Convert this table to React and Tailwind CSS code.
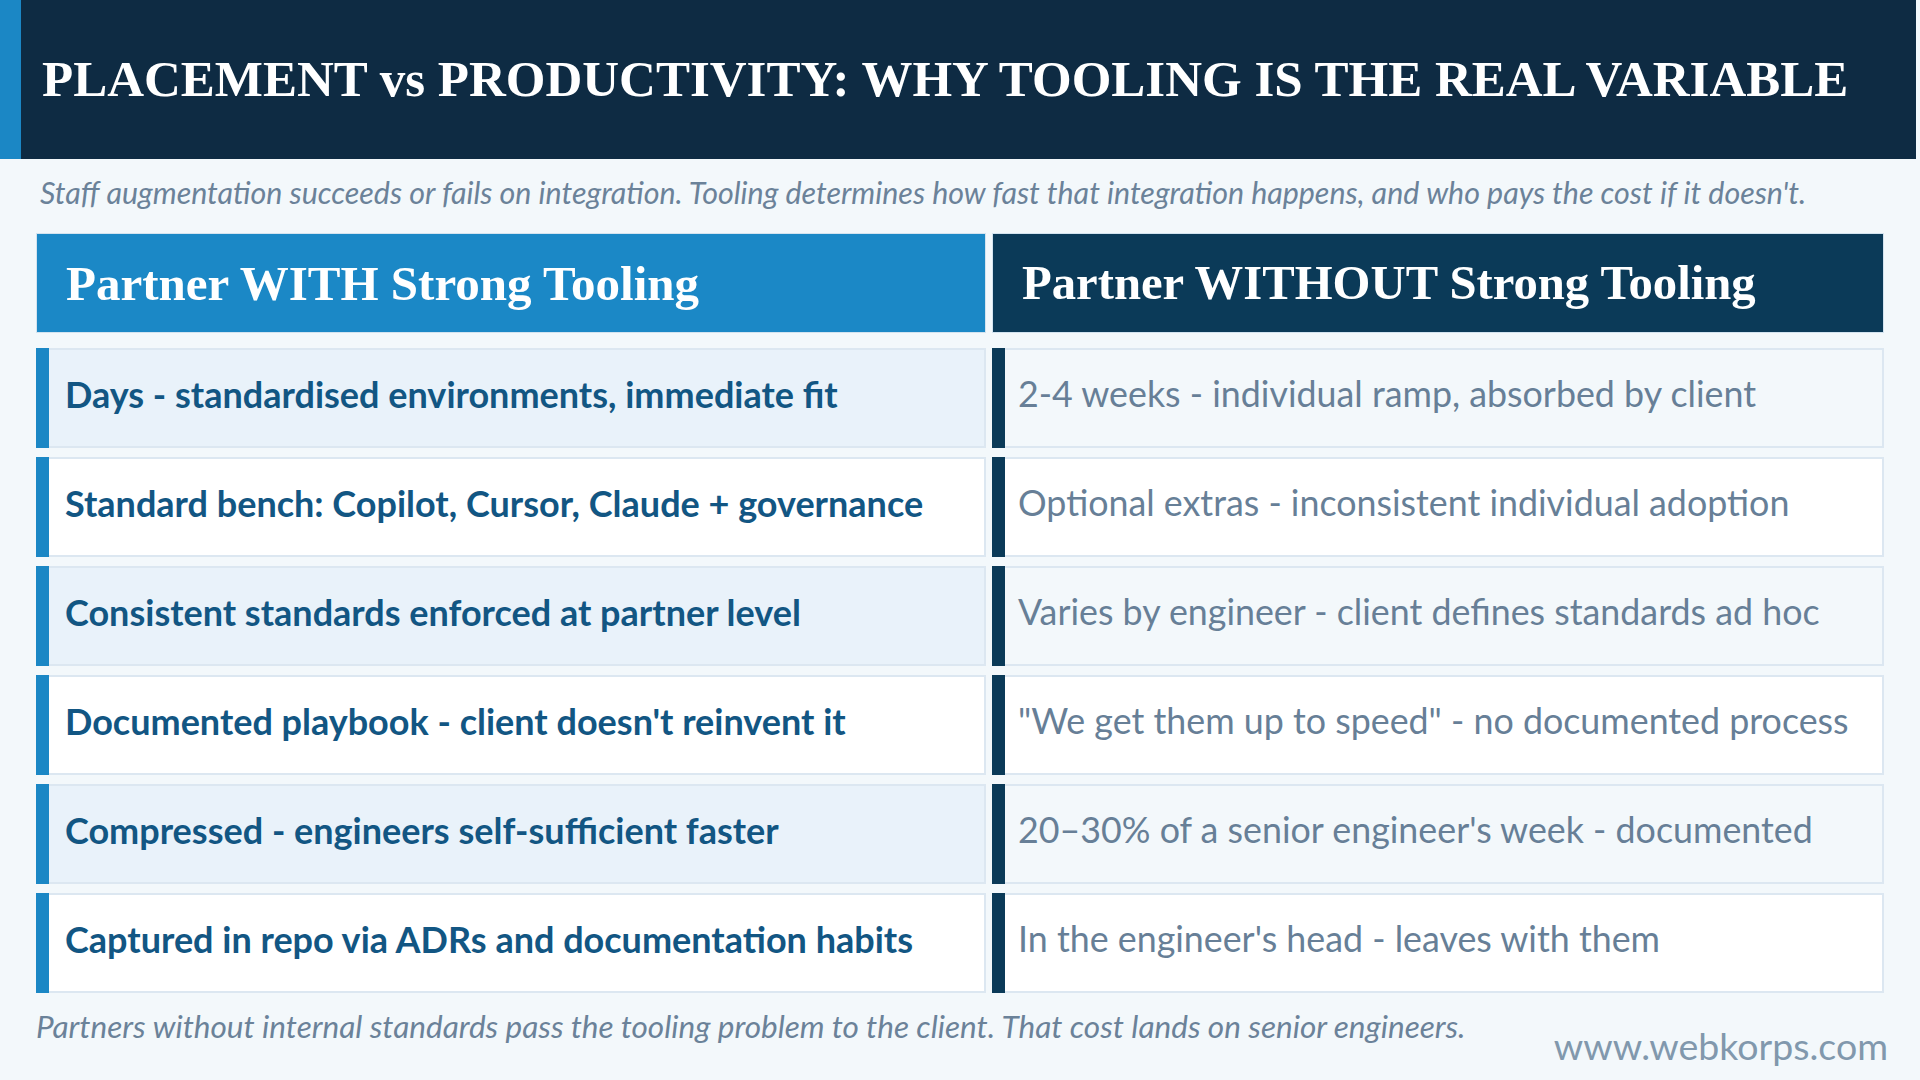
import React from "react";

const rows = [
  ["Days - standardised environments, immediate fit", "2-4 weeks - individual ramp, absorbed by client"],
  ["Standard bench: Copilot, Cursor, Claude + governance", "Optional extras - inconsistent individual adoption"],
  ["Consistent standards enforced at partner level", "Varies by engineer - client defines standards ad hoc"],
  ["Documented playbook - client doesn't reinvent it", "\"We get them up to speed\" - no documented process"],
  ["Compressed - engineers self-sufficient faster", "20–30% of a senior engineer's week - documented"],
  ["Captured in repo via ADRs and documentation habits", "In the engineer's head - leaves with them"],
];

const sans = "font-['Lato','Open_Sans',sans-serif]";
const serif = "font-['Liberation_Serif','Times_New_Roman',serif]";

export default function App() {
  return (
    <div className={`w-[1920px] h-[1080px] bg-[#f3f8fb] flex flex-col overflow-hidden ${sans}`}>
      {/* Title bar */}
      <div className="w-[1916px] h-[159px] bg-[#0e2b43] flex shrink-0">
        <div className="w-[21px] bg-[#1b87c5]" />
        <div className="flex items-center pl-[21px]">
          <h1 className={`${serif} text-[51px] font-bold text-white leading-none`}>
            PLACEMENT vs PRODUCTIVITY: WHY TOOLING IS THE REAL VARIABLE
          </h1>
        </div>
      </div>

      <p className="h-[74px] flex items-center pl-[40px] pb-[8px] text-[30.4px] italic text-[#6b8299] leading-none">
        Staff augmentation succeeds or fails on integration. Tooling determines how fast that integration happens, and who pays the cost if it doesn't.
      </p>

      {/* Comparison table */}
      <div className="ml-[36px] grid grid-cols-[950px_892px] gap-x-[6px]">
        <div className="h-[100px] bg-[#1b88c6] border border-[#d3e3ef] flex items-center pl-[29px]">
          <h2 className={`${serif} text-[49px] font-bold text-white leading-none`}>Partner WITH Strong Tooling</h2>
        </div>
        <div className="h-[100px] bg-[#0b3a58] border border-[#d3e3ef] flex items-center pl-[29px]">
          <h2 className={`${serif} text-[48.7px] font-bold text-white leading-none`}>Partner WITHOUT Strong Tooling</h2>
        </div>
      </div>

      <div className="ml-[36px] mt-[15px] grid grid-cols-[950px_892px] gap-x-[6px] gap-y-[9px]">
        {rows.map(([good, bad], i) => (
          <React.Fragment key={i}>
            <div className="h-[100px] flex">
              <div className="w-[13px] bg-[#1b87c5] shrink-0" />
              <div className={`flex-1 flex items-center pl-[16px] pb-[9px] border-2 border-l-0 border-[#dce7f1] ${i % 2 === 0 ? "bg-[#e9f2fa]" : "bg-white"}`}>
                <span className="text-[36px] font-bold text-[#125683] leading-none">{good}</span>
              </div>
            </div>
            <div className="h-[100px] flex">
              <div className="w-[13px] bg-[#0b3a58] shrink-0" />
              <div className={`flex-1 flex items-center pl-[13px] pb-[9px] border-2 border-l-0 border-[#dce7f1] ${i % 2 === 0 ? "bg-[#f3f8fb]" : "bg-white"}`}>
                <span className="text-[35.8px] text-[#677f97] leading-none">{bad}</span>
              </div>
            </div>
          </React.Fragment>
        ))}
      </div>

      {/* Footer */}
      <div className="flex justify-between items-start pl-[36px] pr-[32px] mt-[18px]">
        <p className="text-[31.5px] italic text-[#6b8299] leading-none">
          Partners without internal standards pass the tooling problem to the client. That cost lands on senior engineers.
        </p>
        <span className="text-[37.5px] text-[#8198ad] leading-none mt-[16px]">www.webkorps.com</span>
      </div>
    </div>
  );
}
